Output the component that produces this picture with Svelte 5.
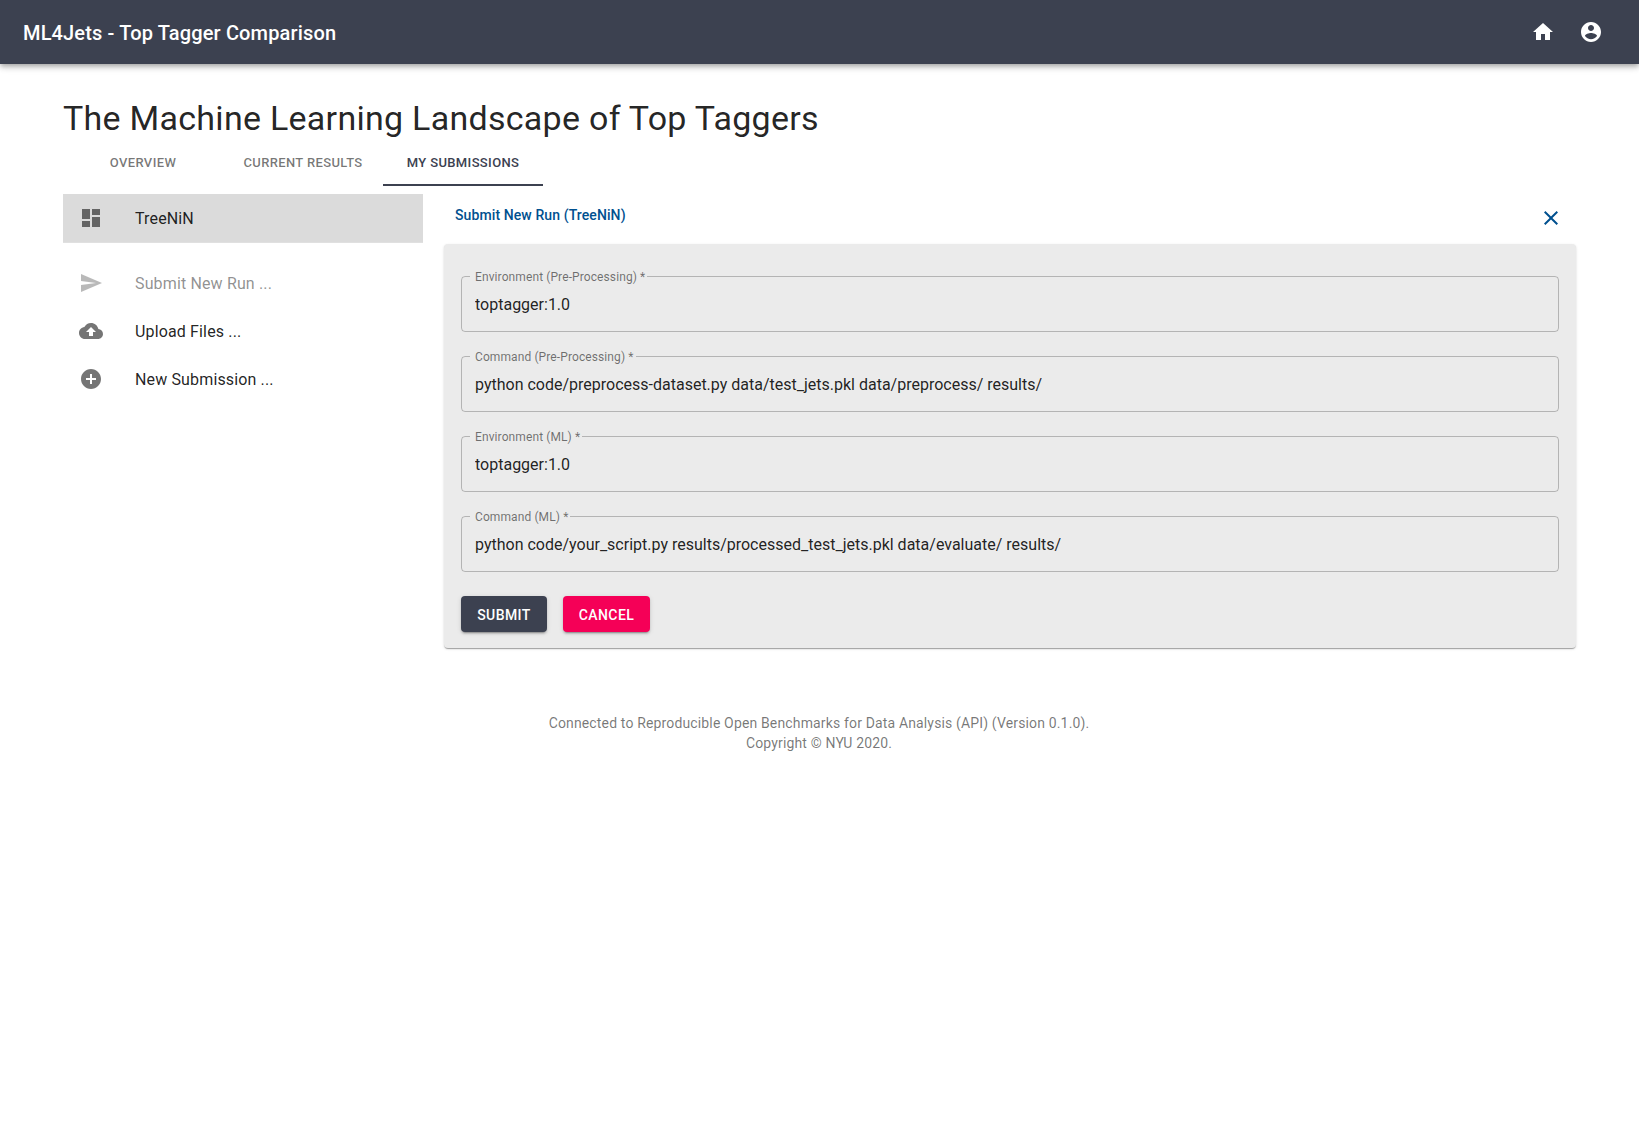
<script>
  const tabs = ['Overview', 'Current Results', 'My Submissions'];
  const activeTab = 'My Submissions';

  const icons = {
    home: 'M10 20v-6h4v6h5v-8h3L12 3 2 12h3v8z',
    account:
      'M12 2C6.48 2 2 6.48 2 12s4.48 10 10 10 10-4.48 10-10S17.52 2 12 2zm0 3c1.66 0 3 1.34 3 3s-1.34 3-3 3-3-1.34-3-3 1.34-3 3-3zm0 14.2c-2.5 0-4.71-1.28-6-3.22.03-1.99 4-3.08 6-3.08 1.99 0 5.97 1.09 6 3.08-1.29 1.94-3.5 3.22-6 3.22z',
    dashboard: 'M3 13h8V3H3v10zm0 8h8v-6H3v6zm10 0h8V11h-8v10zm0-18v6h8V3h-8z',
    send: 'M2.01 21L23 12 2.01 3 2 10l15 2-15 2z',
    upload:
      'M19.35 10.04C18.67 6.59 15.64 4 12 4 9.11 4 6.6 5.64 5.35 8.04 2.34 8.36 0 10.91 0 14c0 3.31 2.69 6 6 6h13c2.76 0 5-2.24 5-5 0-2.64-2.05-4.78-4.65-4.96zM14 13v4h-4v-4H7l5-5 5 5h-3z',
    add: 'M12 2C6.48 2 2 6.48 2 12s4.48 10 10 10 10-4.48 10-10S17.52 2 12 2zm5 11h-4v4h-2v-4H7v-2h4V7h2v4h4v2z',
    close:
      'M19 6.41L17.59 5 12 10.59 6.41 5 5 6.41 10.59 12 5 17.59 6.41 19 12 13.41 17.59 19 19 17.59 13.41 12z'
  };

  const actions = [
    { label: 'Submit New Run ...', icon: icons.send, disabled: true },
    { label: 'Upload Files ...', icon: icons.upload, disabled: false },
    { label: 'New Submission ...', icon: icons.add, disabled: false }
  ];

  let fields = $state([
    { label: 'Environment (Pre-Processing) *', value: 'toptagger:1.0' },
    {
      label: 'Command (Pre-Processing) *',
      value: 'python code/preprocess-dataset.py data/test_jets.pkl data/preprocess/ results/'
    },
    { label: 'Environment (ML) *', value: 'toptagger:1.0' },
    {
      label: 'Command (ML) *',
      value: 'python code/your_script.py results/processed_test_jets.pkl data/evaluate/ results/'
    }
  ]);
</script>

{#snippet icon(path)}
  <svg class="icon" viewBox="0 0 24 24" aria-hidden="true"><path d={path} /></svg>
{/snippet}

<header class="app-bar">
  <div class="brand">ML4Jets - Top Tagger Comparison</div>
  <button class="icon-button" aria-label="Home">{@render icon(icons.home)}</button>
  <button class="icon-button" aria-label="Account">{@render icon(icons.account)}</button>
</header>

<main class="page">
  <h1>The Machine Learning Landscape of Top Taggers</h1>

  <nav class="tabs">
    {#each tabs as tab}
      <button class="tab" class:active={tab === activeTab}>{tab}</button>
    {/each}
  </nav>

  <div class="columns">
    <aside class="sidebar">
      <div class="item selected">{@render icon(icons.dashboard)}<span>TreeNiN</span></div>
      <hr />
      <div class="actions">
        {#each actions as action}
          <div class="item" class:disabled={action.disabled}>
            {@render icon(action.icon)}<span>{action.label}</span>
          </div>
        {/each}
      </div>
    </aside>

    <section class="content">
      <div class="panel-head">
        <h2>Submit New Run (TreeNiN)</h2>
        <button class="close" aria-label="Close">{@render icon(icons.close)}</button>
      </div>

      <form class="paper">
        <div class="fields">
          {#each fields as field}
            <fieldset class="field">
              <legend><span>{field.label}</span></legend>
              <input type="text" aria-label={field.label} bind:value={field.value} />
            </fieldset>
          {/each}
        </div>
        <div class="buttons">
          <button type="button" class="button primary">Submit</button>
          <button type="button" class="button secondary">Cancel</button>
        </div>
      </form>
    </section>
  </div>
</main>

<footer>
  <div>Connected to Reproducible Open Benchmarks for Data Analysis (API) (Version 0.1.0).</div>
  <div>Copyright © NYU 2020.</div>
</footer>

<style>
  :global(body) {
    margin: 0;
    background: #fff;
    color: rgba(0, 0, 0, 0.87);
    font-family: Roboto, 'Liberation Sans', sans-serif;
    font-size: 16px;
  }

  button {
    border: 0;
    margin: 0;
    background: transparent;
    font-family: inherit;
    cursor: pointer;
  }

  .icon {
    display: block;
    flex: none;
    width: 24px;
    height: 24px;
    fill: currentColor;
  }

  .app-bar {
    box-sizing: border-box;
    display: flex;
    align-items: center;
    height: 64px;
    padding: 0 24px 0 23px;
    background: #3c4150;
    color: #fff;
    box-shadow:
      0 2px 4px -1px rgba(0, 0, 0, 0.2),
      0 4px 5px 0 rgba(0, 0, 0, 0.14),
      0 1px 10px 0 rgba(0, 0, 0, 0.12);
  }

  .brand {
    flex: 1;
    padding-top: 2px;
    font-size: 20px;
    font-weight: 500;
    line-height: 32px;
    letter-spacing: 0.0075em;
  }

  .icon-button {
    padding: 12px;
    color: inherit;
  }

  .page {
    padding: 33px 63px 0;
  }

  h1 {
    margin: 0;
    font-size: 34px;
    font-weight: 400;
    line-height: 42px;
    letter-spacing: 0.008em;
  }

  .tabs {
    display: flex;
    height: 47px;
  }

  .tab {
    width: 160px;
    padding: 2px 12px 0;
    border-bottom: 2px solid transparent;
    color: rgba(0, 0, 0, 0.54);
    font-size: 13px;
    font-weight: 500;
    line-height: 23px;
    letter-spacing: 0.02857em;
    text-transform: uppercase;
    white-space: nowrap;
  }

  .tab.active {
    border-bottom-color: #3c4150;
    color: #3c4150;
  }

  .columns {
    display: grid;
    grid-template-columns: 360px 1fr;
    column-gap: 21px;
    padding-top: 8px;
  }

  .item {
    display: flex;
    align-items: center;
    gap: 32px;
    height: 48px;
    padding: 0 16px;
    letter-spacing: 0.009em;
    line-height: 24px;
  }

  .item span {
    padding-top: 2px;
  }

  .item .icon {
    color: rgba(0, 0, 0, 0.54);
  }

  .item.selected {
    background: #dbdbdb;
  }

  .item.disabled {
    opacity: 0.5;
  }

  hr {
    height: 1px;
    margin: 0;
    border: 0;
    background: rgba(0, 0, 0, 0.12);
  }

  .actions {
    padding-top: 16px;
  }

  .panel-head {
    display: flex;
    justify-content: space-between;
    height: 50px;
    padding: 0 13px 0 11px;
    color: #00508f;
  }

  h2 {
    margin: 10px 0 0;
    font-size: 14px;
    font-weight: 500;
    line-height: 22px;
    letter-spacing: 0.00714em;
  }

  .close {
    align-self: flex-start;
    padding: 12px 0;
    color: inherit;
  }

  .paper {
    padding: 27px 17px 16px;
    border-radius: 4px;
    background: #ebebeb;
    box-shadow:
      0 2px 1px -1px rgba(0, 0, 0, 0.2),
      0 1px 1px 0 rgba(0, 0, 0, 0.14),
      0 1px 3px 0 rgba(0, 0, 0, 0.12);
  }

  .fields {
    display: grid;
    gap: 19px;
  }

  .field {
    box-sizing: border-box;
    height: 61px;
    min-width: 0;
    margin: 0;
    padding: 0 8px;
    border: 1px solid rgba(0, 0, 0, 0.23);
    border-radius: 4px;
  }

  legend {
    height: 11px;
    padding: 0 2px 0 5px;
    color: rgba(0, 0, 0, 0.54);
    font-size: 12px;
    line-height: 13px;
    letter-spacing: 0.0085em;
  }

  .field input {
    display: block;
    box-sizing: border-box;
    width: 100%;
    height: 19px;
    margin: 13px 0 0;
    padding: 0 5px;
    border: 0;
    outline: 0;
    background: none;
    color: rgba(0, 0, 0, 0.87);
    font: 16px Roboto, 'Liberation Sans', sans-serif;
  }

  .buttons {
    display: flex;
    gap: 16px;
    padding-top: 24px;
  }

  .button {
    width: 86px;
    height: 36px;
    padding: 1px 0 0;
    border-radius: 4px;
    color: #fff;
    font-size: 14px;
    font-weight: 500;
    letter-spacing: 0.03em;
    text-transform: uppercase;
    box-shadow:
      0 3px 1px -2px rgba(0, 0, 0, 0.2),
      0 2px 2px 0 rgba(0, 0, 0, 0.14),
      0 1px 5px 0 rgba(0, 0, 0, 0.12);
  }

  .primary {
    background: #3c4150;
  }

  .secondary {
    width: 87px;
    background: #f50057;
  }

  footer {
    padding: 65px 1px 0 0;
    color: rgba(0, 0, 0, 0.54);
    font-size: 14px;
    line-height: 20px;
    letter-spacing: 0.01071em;
    text-align: center;
  }
</style>
